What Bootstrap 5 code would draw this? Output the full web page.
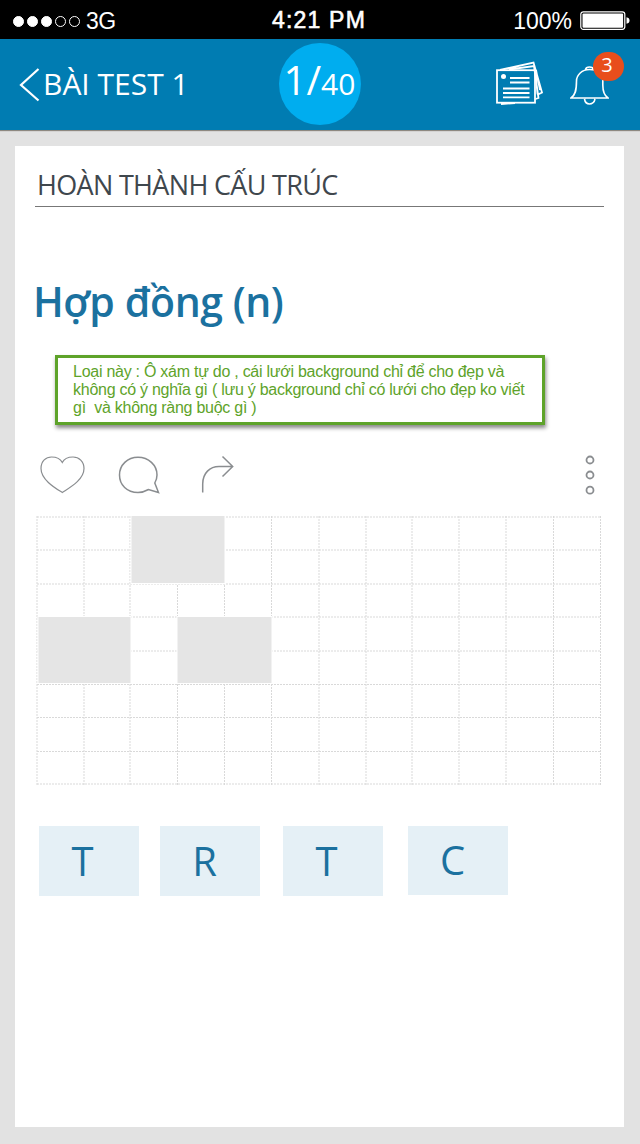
<!DOCTYPE html>
<html lang="vi">
<head>
<meta charset="utf-8">
<meta name="viewport" content="width=device-width, initial-scale=1">
<title>Bài test 1</title>
<link href="https://cdn.jsdelivr.net/npm/bootstrap@5.3.0/dist/css/bootstrap.min.css" rel="stylesheet">
<style>
body{background:#e2e2e2;font-family:"Open Sans",sans-serif;min-height:1144px}
svg{display:block;flex:none}
.status{height:39px;background:#000;color:#fff;font:23px/43px "Liberation Sans",Arial,sans-serif;display:grid;grid-template-columns:1fr auto 1fr;padding:0 11px 0 12px}
.signal{letter-spacing:-.6px}
.clock{font-weight:400;-webkit-text-stroke:.6px #fff;letter-spacing:1.2px;margin:-1px 3px 0 0}
.appbar{height:91px;background:#007cb2;color:#fff;box-shadow:0 1px 1px #8d8880;display:grid;grid-template-columns:1fr auto 1fr;padding:0 18px 0 17px;position:relative}
.back{font-size:30px;line-height:88px;color:#fff;padding-left:2px}
.back span{margin:-2px 0 0 2px}
.counter{width:82px;height:82px;border-radius:50%;background:#00adef;font-size:30px;line-height:74px;margin-top:4px;white-space:nowrap}
.counter b{font-weight:400;font-size:40px}
.alert-count{position:absolute;left:23px;top:-10px;width:31px;height:29px;background:#e84e1c;font-size:20px;line-height:26px;padding-right:3px}
.sheet{background:#fff;margin:16px 16px 17px 15px;height:981px;padding:16px 20px 0}
.section-title{font-size:27px;line-height:45px;height:45px;border-bottom:1px solid #777;color:#3f474d;padding-left:2px;margin:0;font-weight:400;letter-spacing:-.68px}
.word{font-size:41px;line-height:60px;font-weight:600;color:#1b719f;margin:64px 0 0 -2px;letter-spacing:-.45px}
.hint{width:490px;height:70px;margin:24px 0 0 20px;border:3px solid #5ea32a;box-shadow:1px 3px 4px #0007;color:#5ea32a;font:16px/18px "Liberation Sans",Arial,sans-serif;padding:5px 0 0 15px;white-space:pre;letter-spacing:-.26px}
.actions{height:43px;margin:29px 9px 0 4px}
.board{margin:18px 0 0 1px}
.tiles{margin:41px 0 0 4px}
.tile{width:100px;height:70px;background:#e5f0f6;color:#1b719f;font-size:40px;line-height:69px;text-align:center;padding-right:13px}
.tile-r{margin-left:21px;padding-right:11px}
.tile-t{margin-left:23px}
.tile-c{margin-left:25px;height:69px;line-height:67px;padding-right:11px}
</style>
</head>
<body>
<div class="status">
  <div class="signal d-flex align-items-center">
    <svg width="70" height="14" viewBox="0 0 70 14" class="me-1"><g fill="#fff" stroke="#fff"><circle cx="6.500" cy="6.500" r="5"/><circle cx="20.500" cy="6.500" r="5"/><circle cx="34.500" cy="6.500" r="5"/><g fill="none"><circle cx="48.500" cy="6.500" r="5"/><circle cx="62.500" cy="6.500" r="5"/></g></g></svg>
    <span>3G</span>
  </div>
  <div class="clock">4:21 PM</div>
  <div class="d-flex justify-content-end align-items-center gap-2">
    <span>100%</span>
    <svg width="50" height="20" viewBox="0 0 50 20" style="margin:-3px -1px 0 0"><rect x=".8" y="1.8" width="44" height="17.5" rx="2.5" fill="none" stroke="#fff" stroke-width="1.2"/><rect x="2.5" y="3.5" width="40.6" height="14.2" rx="1" fill="#fff"/><path d="M46.5 7.2q3 .6 3 3.3t-3 3.3z" fill="#fff"/></svg>
  </div>
</div>
<header class="appbar">
  <a class="back d-flex align-items-center text-decoration-none" href="#">
    <svg width="22" height="36" viewBox="0 0 22 36"><path d="M19.5 2L2 18L19.5 33.5" fill="none" stroke="#fff" stroke-width="2.2"/></svg>
    <span>BÀI TEST 1</span>
  </a>
  <div class="counter text-center"><b>1/</b>40</div>
  <div class="d-flex justify-content-end align-items-start">
    <svg width="50" height="46" viewBox="495 60 50 46" style="margin:21px 25px 0 0" fill="none" stroke="#fff" stroke-width="1.8"><path d="M500 70L533.500 62.500L542 92.500L537 95M509 69.500L534 66L538.500 98L535.500 99M536 70L540 90M535.500 73L537.500 94M501 104L515 103"/><rect x="497" y="70.200" width="38" height="32.500"/><path d="M510 78H529.500M510 82.500H529.500M503 88.500H529.500M503 93H529.500M503 97.300H529.500"/><circle cx="503.500" cy="76.500" r="2.500" fill="#fff" stroke="none"/></svg>
    <div class="position-relative" style="margin:23px 13px 0 0">
      <svg width="39" height="44" viewBox="570 62 39 44" fill="none" stroke="#fff" stroke-width="1.600"><path d="M571 98H608C603.500 95 602.800 91 602.800 85V80C602.500 73 597 69.500 589.500 69.500S576.500 75 576.500 81C576.500 90 575.500 95 571 98ZM584.500 99C585 102 587 104 589.500 104S594.500 102 595 99M585.500 69.500Q586 67 589.500 67T593.500 69.500"/></svg>
      <span class="alert-count rounded-pill text-center">3</span>
    </div>
  </div>
</header>
<main class="sheet">
  <h1 class="section-title">HOÀN THÀNH CẤU TRÚC</h1>
  <h2 class="word">Hợp đồng (n)</h2>
  <div class="hint">Loại này : Ô xám tự do , cái lưới background chỉ để cho đẹp và
không có ý nghĩa gì ( lưu ý background chỉ có lưới cho đẹp ko viết
gì  và không ràng buộc gì )</div>
  <div class="actions d-flex justify-content-between">
    <svg width="200" height="43" viewBox="39 454 200 43" fill="none" stroke="#8a8d90" stroke-width="1.500"><path d="M62.300 492.500C56 488.500 41 480 41 468.500C41 461 46 457 51.500 457C57 457 60.500 459 62.300 462.500C64 459 68 457 73 457C79 457 84 461.500 84 468.500C84 480 69 488 62.300 492.500Z" stroke-width="1.200"/><path d="M158.500 492.500L148.500 489.500C145 491.500 142 492.500 138 492.500C127 492.500 119.500 485 119.500 475S127.500 457.300 138 457.300S157 465 157 475Q157 479 154.800 483Z"/><path d="M202.700 492.500V484C202.700 473 210 466.500 219 466.500H232.500M222.500 456.500L232.700 466.500L222.500 476.500"/></svg>
    <svg width="10" height="43" viewBox="585.500 454 10 43" fill="none" stroke="#8a8d90" stroke-width="1.800"><circle cx="590.500" cy="460" r="3.500"/><circle cx="590.500" cy="475" r="3.500"/><circle cx="590.500" cy="490.200" r="3.500"/></svg>
  </div>
  <svg class="board" width="567" height="270" viewBox="36 515 567 270">
    <path d="M37 517H601M37 550H601M37 584H601M37 617H601M37 651H601M37 684.500H601M37 717.500H601M37 751.500H601M37 784H601M37 516V785M84 516V785M130 516V785M177.500 516V785M224.500 516V785M271.500 516V785M319 516V785M366 516V785M412 516V785M459 516V785M506 516V785M553.500 516V785M600.500 516V785" fill="none" stroke="#d9d9d9" stroke-dasharray="2 1"/>
    <g fill="#e5e5e5" stroke="#fff" stroke-width="1"><rect x="131" y="515.500" width="94" height="68"/><rect x="38" y="616.500" width="93" height="67"/><rect x="177" y="616.500" width="95" height="67"/></g>
  </svg>
  <div class="tiles d-flex">
    <div class="tile">T</div>
    <div class="tile tile-r">R</div>
    <div class="tile tile-t">T</div>
    <div class="tile tile-c">C</div>
  </div>
</main>
<script src="https://cdn.jsdelivr.net/npm/bootstrap@5.3.0/dist/js/bootstrap.bundle.min.js"></script>
</body>
</html>
